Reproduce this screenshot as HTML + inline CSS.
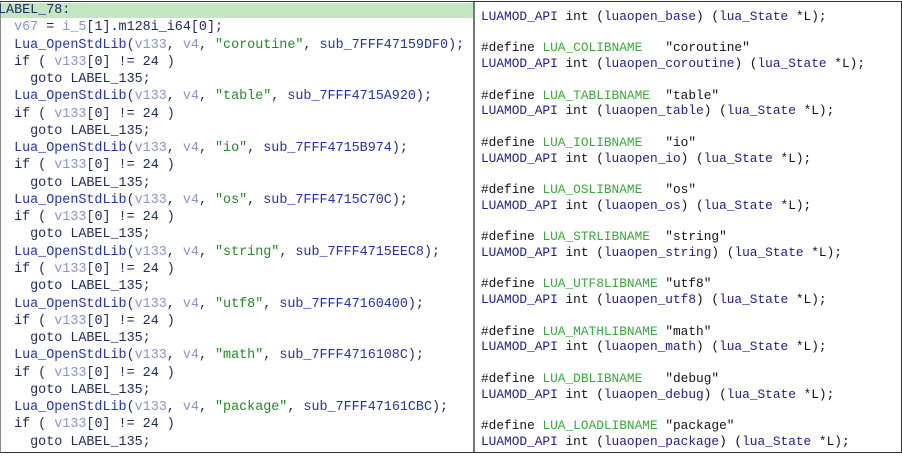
<!DOCTYPE html>
<html><head><style>
body{margin:0;width:902px;height:456px;background:#fff;position:relative;overflow:hidden}
.frame{position:absolute;left:0;top:1px;width:900px;height:450px;border:1px solid #333;border-left:1px solid #888}
.div{position:absolute;left:473px;top:2px;width:2px;height:450px;background:#777}
.bar{position:absolute;left:1px;top:3px;width:472px;height:15px;background:#c3e6c3}
.L{position:absolute;left:-2px;top:2px;font:13.4px/17.26px "Liberation Mono",monospace;color:#1f2a5c;white-space:pre}
.R{position:absolute;left:481px;top:9px;font:12.8px/15.74px "Liberation Mono",monospace;color:#111;white-space:pre}
.f{color:#2233aa}.v{color:#8a94cf}.s{color:#218a21}
.n{color:#1c1c8c}.g{color:#3aa83a}
</style></head><body>
<div class="frame"></div><div class="bar"></div><div class="div"></div>
<div class="L">LABEL_78:
  <span class="v">v67</span> = <span class="v">i_5</span>[1].m128i_i64[0];
  <span class="f">Lua_OpenStdLib</span>(<span class="v">v133</span>, <span class="v">v4</span>, <span class="s">"coroutine"</span>, <span class="f">sub_7FFF47159DF0</span>);
  if ( <span class="v">v133</span>[0] != 24 )
    goto LABEL_135;
  <span class="f">Lua_OpenStdLib</span>(<span class="v">v133</span>, <span class="v">v4</span>, <span class="s">"table"</span>, <span class="f">sub_7FFF4715A920</span>);
  if ( <span class="v">v133</span>[0] != 24 )
    goto LABEL_135;
  <span class="f">Lua_OpenStdLib</span>(<span class="v">v133</span>, <span class="v">v4</span>, <span class="s">"io"</span>, <span class="f">sub_7FFF4715B974</span>);
  if ( <span class="v">v133</span>[0] != 24 )
    goto LABEL_135;
  <span class="f">Lua_OpenStdLib</span>(<span class="v">v133</span>, <span class="v">v4</span>, <span class="s">"os"</span>, <span class="f">sub_7FFF4715C70C</span>);
  if ( <span class="v">v133</span>[0] != 24 )
    goto LABEL_135;
  <span class="f">Lua_OpenStdLib</span>(<span class="v">v133</span>, <span class="v">v4</span>, <span class="s">"string"</span>, <span class="f">sub_7FFF4715EEC8</span>);
  if ( <span class="v">v133</span>[0] != 24 )
    goto LABEL_135;
  <span class="f">Lua_OpenStdLib</span>(<span class="v">v133</span>, <span class="v">v4</span>, <span class="s">"utf8"</span>, <span class="f">sub_7FFF47160400</span>);
  if ( <span class="v">v133</span>[0] != 24 )
    goto LABEL_135;
  <span class="f">Lua_OpenStdLib</span>(<span class="v">v133</span>, <span class="v">v4</span>, <span class="s">"math"</span>, <span class="f">sub_7FFF4716108C</span>);
  if ( <span class="v">v133</span>[0] != 24 )
    goto LABEL_135;
  <span class="f">Lua_OpenStdLib</span>(<span class="v">v133</span>, <span class="v">v4</span>, <span class="s">"package"</span>, <span class="f">sub_7FFF47161CBC</span>);
  if ( <span class="v">v133</span>[0] != 24 )
    goto LABEL_135;</div>
<div class="R"><span class="n">LUAMOD_API</span> int (<span class="n">luaopen_base</span>) (<span class="n">lua_State</span> *L);

#define <span class="g">LUA_COLIBNAME</span>   "coroutine"
<span class="n">LUAMOD_API</span> int (<span class="n">luaopen_coroutine</span>) (<span class="n">lua_State</span> *L);

#define <span class="g">LUA_TABLIBNAME</span>  "table"
<span class="n">LUAMOD_API</span> int (<span class="n">luaopen_table</span>) (<span class="n">lua_State</span> *L);

#define <span class="g">LUA_IOLIBNAME</span>   "io"
<span class="n">LUAMOD_API</span> int (<span class="n">luaopen_io</span>) (<span class="n">lua_State</span> *L);

#define <span class="g">LUA_OSLIBNAME</span>   "os"
<span class="n">LUAMOD_API</span> int (<span class="n">luaopen_os</span>) (<span class="n">lua_State</span> *L);

#define <span class="g">LUA_STRLIBNAME</span>  "string"
<span class="n">LUAMOD_API</span> int (<span class="n">luaopen_string</span>) (<span class="n">lua_State</span> *L);

#define <span class="g">LUA_UTF8LIBNAME</span> "utf8"
<span class="n">LUAMOD_API</span> int (<span class="n">luaopen_utf8</span>) (<span class="n">lua_State</span> *L);

#define <span class="g">LUA_MATHLIBNAME</span> "math"
<span class="n">LUAMOD_API</span> int (<span class="n">luaopen_math</span>) (<span class="n">lua_State</span> *L);

#define <span class="g">LUA_DBLIBNAME</span>   "debug"
<span class="n">LUAMOD_API</span> int (<span class="n">luaopen_debug</span>) (<span class="n">lua_State</span> *L);

#define <span class="g">LUA_LOADLIBNAME</span> "package"
<span class="n">LUAMOD_API</span> int (<span class="n">luaopen_package</span>) (<span class="n">lua_State</span> *L);</div>
</body></html>
